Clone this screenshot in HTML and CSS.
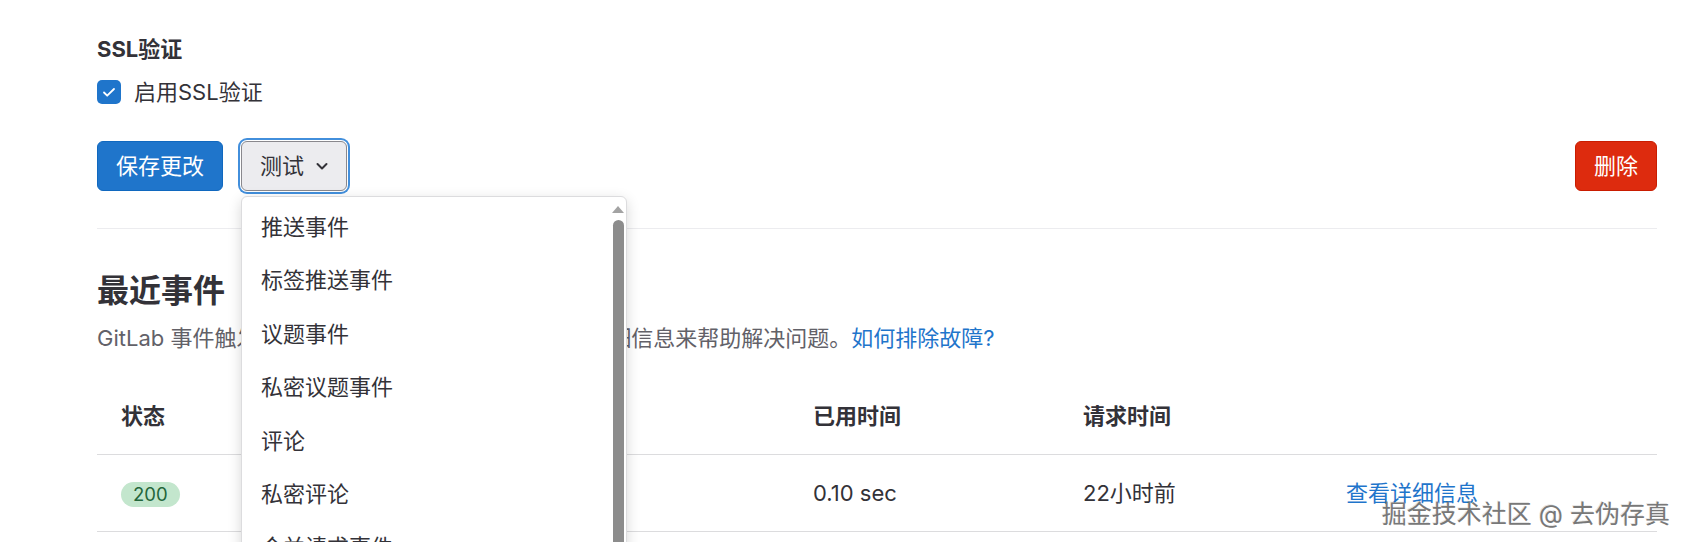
FILE: index.html
```html
<!DOCTYPE html>
<html lang="zh-CN">
<head>
  <meta charset="UTF-8" />
  <meta name="viewport" content="width=device-width, initial-scale=1.0"/>
  <title>Webhook 设置</title>
  <link rel="stylesheet" href="styles.css">
</head>
<body>

<div class="page">
  <div class="form-group">
    <h3 class="field-label">SSL验证</h3>
    <label class="check">
      <span class="check-box">
        <svg width="24" height="24" viewBox="0 0 24 24"><path d="M7 12.5l3.2 3.2L17 9" fill="none" stroke="#fff" stroke-width="1.8" stroke-linecap="round" stroke-linejoin="round"/></svg>
      </span>
      启用SSL验证
    </label>
  </div>

  <div class="actions">
    <button class="btn btn-confirm">保存更改</button>
    <div class="dropdown">
      <button class="btn btn-default is-focused">
        测试
        <svg width="20" height="20" viewBox="0 0 20 20"><path d="M5.5 8l4.5 4.5L14.5 8" fill="none" stroke="#333238" stroke-width="2" stroke-linecap="round" stroke-linejoin="round"/></svg>
      </button>
      <div class="dropdown-menu">
        <ul class="dropdown-list">
          <li>推送事件</li>
          <li>标签推送事件</li>
          <li>议题事件</li>
          <li>私密议题事件</li>
          <li>评论</li>
          <li>私密评论</li>
          <li>合并请求事件</li>
          <li>作业事件</li>
        </ul>
        <div class="scrollbar">
          <span class="scroll-arrow"></span>
          <span class="scroll-thumb"></span>
        </div>
      </div>
    </div>
    <button class="btn btn-danger">删除</button>
  </div>

  <hr class="divider">

  <h2 class="section-title">最近事件</h2>
  <p class="section-desc">GitLab 事件触发 webhook。使用webhook的请求详细信息来帮助解决问题。<a href="#">如何排除故障?</a></p>

  <table class="events">
    <colgroup>
      <col style="width: 193px">
      <col style="width: 180px">
      <col style="width: 319px">
      <col style="width: 270px">
      <col style="width: 263px">
      <col>
    </colgroup>
    <thead>
      <tr>
        <th>状态</th>
        <th>触发器</th>
        <th>URL</th>
        <th>已用时间</th>
        <th>请求时间</th>
        <th></th>
      </tr>
    </thead>
    <tbody>
      <tr>
        <td><span class="badge-success">200</span></td>
        <td>推送事件</td>
        <td><span class="url">http://10.0.0.8</span></td>
        <td>0.10 sec</td>
        <td>22小时前</td>
        <td><a href="#">查看详细信息</a></td>
      </tr>
      <tr>
        <td><span class="badge-success">200</span></td>
        <td>推送事件</td>
        <td><span class="url">http://10.0.0.8</span></td>
        <td>0.12 sec</td>
        <td>1天前</td>
        <td><a href="#">查看详细信息</a></td>
      </tr>
    </tbody>
  </table>
</div>

<div class="watermark">掘金技术社区 @ 去伪存真</div>

</body>
</html>
```

FILE: styles.css
```css
html, body {
  height: 100%;
  overflow: hidden;
}
body {
  margin: 0;
  background: #fff;
  color: #333238;
  font-family: Inter, "Noto Sans CJK SC", sans-serif;
  font-size: 22px;
  line-height: 32px;
}
.page {
  padding: 33px 29px 0 97px;
}
.field-label {
  margin: 0;
  font-size: 22px;
  font-weight: 700;
  line-height: 32px;
}
.check {
  display: flex;
  align-items: center;
  gap: 13px;
  margin-top: 11px;
  line-height: 32px;
}
.check-box {
  width: 24px;
  height: 24px;
  border-radius: 5px;
  background: #1f75cb;
  display: flex;
}

/* buttons row */
.actions {
  display: flex;
  align-items: center;
  gap: 18px;
  margin-top: 33px;
}
.btn {
  height: 50px;
  padding: 0 18px;
  border-radius: 6px;
  font-family: inherit;
  font-size: 22px;
  line-height: 1;
  border: 1px solid transparent;
  display: flex;
  align-items: center;
  cursor: pointer;
}
.btn-confirm {
  background: #1f75cb;
  border-color: #1068bf;
  color: #fff;
}
.btn-danger {
  margin-left: auto;
  background: #dd2b0e;
  border-color: #c91c00;
  color: #fff;
}
.btn-default {
  background: #ececef;
  border-color: #89888d;
  color: #333238;
  gap: 8px;
  padding-right: 14px;
}
.is-focused {
  box-shadow: 0 0 0 1px #fff, 0 0 0 3px #428fdc;
}
.dropdown {
  position: relative;
}
.dropdown-menu {
  position: absolute;
  left: 0;
  top: 55px;
  width: 384px;
  height: 420px;
  background: #fff;
  border: 1px solid #dcdcde;
  border-radius: 6px;
  box-shadow: 0 4px 14px rgba(0, 0, 0, 0.16);
  display: flex;
  z-index: 10;
}
.dropdown-list {
  flex: 1;
  list-style: none;
  margin: 0;
  padding: 4px 0 0;
}
.dropdown-list li {
  height: 53.4px;
  line-height: 53.4px;
  padding-left: 19px;
}
.scrollbar {
  width: 16px;
  padding-top: 9px;
  display: flex;
  flex-direction: column;
  align-items: center;
}
.scroll-arrow {
  width: 0;
  height: 0;
  border-left: 6px solid transparent;
  border-right: 6px solid transparent;
  border-bottom: 7px solid #a3a3a3;
}
.scroll-thumb {
  margin-top: 7px;
  width: 11px;
  flex: 1;
  border-radius: 6px;
  background: #8c8c8c;
}

.divider {
  margin: 37px 0 0;
  border: 0;
  border-top: 1px solid #ececef;
}
.section-title {
  margin: 42px 0 0;
  font-size: 32px;
  font-weight: 700;
  line-height: 40px;
}
.section-desc {
  margin: 11px 0 0;
  color: #626168;
}
a {
  color: #1f75cb;
  text-decoration: none;
}

/* recent events table */
.events {
  width: 100%;
  margin-top: 24px;
  border-collapse: collapse;
  table-layout: fixed;
}
.events th,
.events td {
  height: 76px;
  padding: 0 24px;
  text-align: left;
  border-bottom: 1px solid #dcdcde;
  white-space: nowrap;
}
.events th {
  font-weight: 700;
}
.url {
  display: inline-block;
  max-width: 110px;
  overflow: hidden;
  vertical-align: middle;
}
.badge-success {
  display: inline-block;
  padding: 0 12px;
  height: 25px;
  line-height: 25px;
  border-radius: 13px;
  font-size: 18.5px;
  background: #c3e6cd;
  color: #24663b;
}

.watermark {
  position: absolute;
  right: 16px;
  bottom: 13px;
  font-size: 25px;
  line-height: 30px;
  color: #787878;
  text-shadow: 1px 1px 1px rgba(255, 255, 255, 0.9), -1px -1px 0 rgba(0, 0, 0, 0.1);
}
```
